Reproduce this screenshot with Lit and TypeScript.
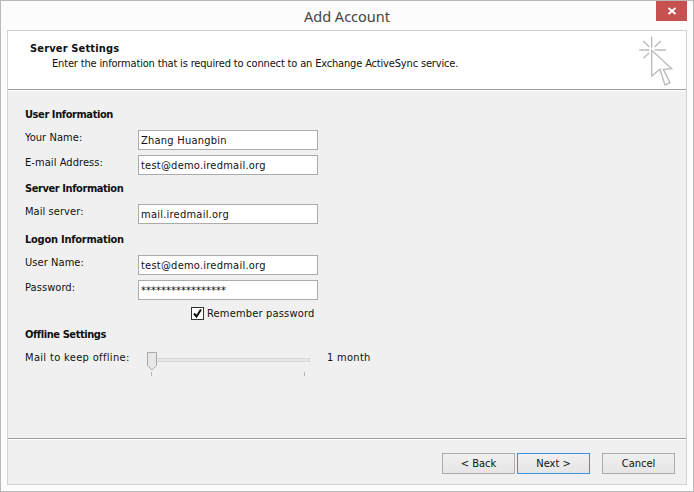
import { LitElement, html, css } from "lit";
import { customElement } from "lit/decorators.js";

@customElement("app-root")
export class AppRoot extends LitElement {
  static styles = css`
    :host { display: block; width: 694px; height: 492px; font-family: "DejaVu Sans", "Liberation Sans", sans-serif; font-stretch: condensed; font-size: 11px; color: #111; }
    .win { box-sizing: border-box; width: 694px; height: 492px; border: 1px solid #b9b9b9; background: #fcfcfc; display: flex; flex-direction: column; padding: 0 6px 6px; }
    .title { height: 29px; flex: none; display: flex; justify-content: center; position: relative; font-family: "Noto Sans", sans-serif; font-stretch: normal; font-size: 14.5px; color: #444; line-height: 30px; }
    .close { position: absolute; left: 649px; top: 0; width: 31px; height: 20px; background: #c75050; display: flex; align-items: center; justify-content: center; }
    .panel { flex: 1; border: 1px solid #d2d2d2; display: flex; flex-direction: column; background: #f0f0f0; min-height: 0; }
    .head { height: 58px; flex: none; background: #fff; border-bottom: 1px solid #a0a0a0; box-shadow: 0 1px 0 #fff; display: flex; justify-content: space-between; }
    .head-text { padding: 10px 0 0 22px; line-height: 15px; }
    .head-title { font-weight: 700; letter-spacing: .15px; }
    .head-sub { padding-left: 22px; letter-spacing: -.165px; }
    .cursor { margin: 5px 13px 0 0; }
    .body { flex: 1; padding: 0 0 0 17px; display: flex; flex-direction: column; }
    h3 { margin: 0; font-size: 11px; font-weight: 700; line-height: 15px; letter-spacing: -.42px; }
    h3.logon { letter-spacing: -.25px; }
    .row { display: flex; align-items: flex-start; height: 20px; }
    .lbl { width: 113px; flex: none; line-height: 15px; letter-spacing: .07px; }
    .lbl.wide { letter-spacing: .34px; }
    .input { box-sizing: border-box; width: 180px; height: 20px; border: 1px solid #ababab; background: #fff; padding: 0 2px; line-height: 20px; letter-spacing: .24px; }
    .input.pw { letter-spacing: .06px; }
    .s1 { margin-top: 17px; }
    .gap8 { margin-top: 8px; }
    .gap5 { margin-top: 5px; }
    .gap6 { margin-top: 6px; }
    .check { display: flex; align-items: center; gap: 3px; margin: 6px 0 0 166px; height: 15px; line-height: 15px; letter-spacing: .18px; }
    .box { box-sizing: border-box; width: 13px; height: 13px; border: 1px solid #333; background: #fff; display: flex; }
    .slider-row { display: flex; margin-top: 8px; height: 28px; }
    .slider { position: relative; width: 165px; height: 28px; flex: none; margin-left: 7px; margin-top: 1px; }
    .track { position: absolute; left: 6px; top: 7px; right: 0; height: 4px; background: #e7e7e7; border: 1px solid #d6d6d6; box-sizing: border-box; }
    .thumb { position: absolute; left: 1px; top: 1px; }
    .tick { position: absolute; top: 21px; width: 1px; height: 4px; background: #b5b5b5; }
    .tick-a { left: 6px; }
    .tick-b { left: 159px; }
    .val { margin-left: 17px; line-height: 15px; letter-spacing: .3px; }
    .foot { height: 46px; flex: none; border-top: 1px solid #a0a0a0; box-shadow: inset 0 1px 0 #fff; display: flex; padding: 14px 8px 0 434px; box-sizing: border-box; }
    .btn { box-sizing: border-box; width: 73px; height: 21px; border: 1px solid #acacac; background: linear-gradient(#f0f0f0, #e5e5e5); text-align: center; line-height: 19px; }
    .next { margin-left: 2px; border-color: #3f8fdc; }
    .cancel { margin-left: 12px; }
  `;

  render() {
    return html`<div class="win">
      <div class="title">
        Add Account
        <div class="close">
          <svg width="10" height="10" viewBox="0 0 10 10"><path d="M1.5 2L8.5 8M8.5 2L1.5 8" stroke="#fff" stroke-width="2"/></svg>
        </div>
      </div>
      <div class="panel">
        <div class="head">
          <div class="head-text">
            <div class="head-title">Server Settings</div>
            <div class="head-sub">Enter the information that is required to connect to an Exchange ActiveSync service.</div>
          </div>
          <svg class="cursor" width="35" height="50" viewBox="0 0 35 50" fill="none" stroke="#bcbcbc" stroke-width="1.4">
            <path d="M1.3 14H11.3M16.7 14H28M13.7 .7V11.7M5.3 5L11.3 11M22.7 5L16.7 11M5.3 22.3L11.3 16.7"/>
            <path d="M13.7 14.3V40L22 33.3L27 49L32 46.7L25.3 33.3L33.7 32.7Z" fill="#fff"/>
          </svg>
        </div>
        <div class="body">
          <h3 class="s1">User Information</h3>
          <div class="row gap8"><div class="lbl">Your Name:</div><div class="input">Zhang Huangbin</div></div>
          <div class="row gap5"><div class="lbl">E-mail Address:</div><div class="input">test@demo.iredmail.org</div></div>
          <h3 class="gap6">Server Information</h3>
          <div class="row gap8"><div class="lbl">Mail server:</div><div class="input">mail.iredmail.org</div></div>
          <h3 class="logon gap8">Logon Information</h3>
          <div class="row gap8"><div class="lbl">User Name:</div><div class="input">test@demo.iredmail.org</div></div>
          <div class="row gap5"><div class="lbl">Password:</div><div class="input pw">*****************</div></div>
          <div class="check">
            <div class="box"><svg width="11" height="11" viewBox="0 0 11 11"><path d="M2 5.5L4.5 8.5L9 1.5" fill="none" stroke="#111" stroke-width="2"/></svg></div>
            Remember password
          </div>
          <h3 class="gap6">Offline Settings</h3>
          <div class="slider-row">
            <div class="lbl wide">Mail to keep offline:</div>
            <div class="slider">
              <div class="track"></div>
              <svg class="thumb" width="12" height="20" viewBox="0 0 12 20"><path d="M1.5 .5H10.5V13.5L6 18L1.5 13.5Z" fill="#e8e8e8" stroke="#a8a8a8"/></svg>
              <div class="tick tick-a"></div>
              <div class="tick tick-b"></div>
            </div>
            <div class="val">1 month</div>
          </div>
        </div>
        <div class="foot">
          <div class="btn">&lt; Back</div>
          <div class="btn next">Next &gt;</div>
          <div class="btn cancel">Cancel</div>
        </div>
      </div>
    </div>`;
  }
}
